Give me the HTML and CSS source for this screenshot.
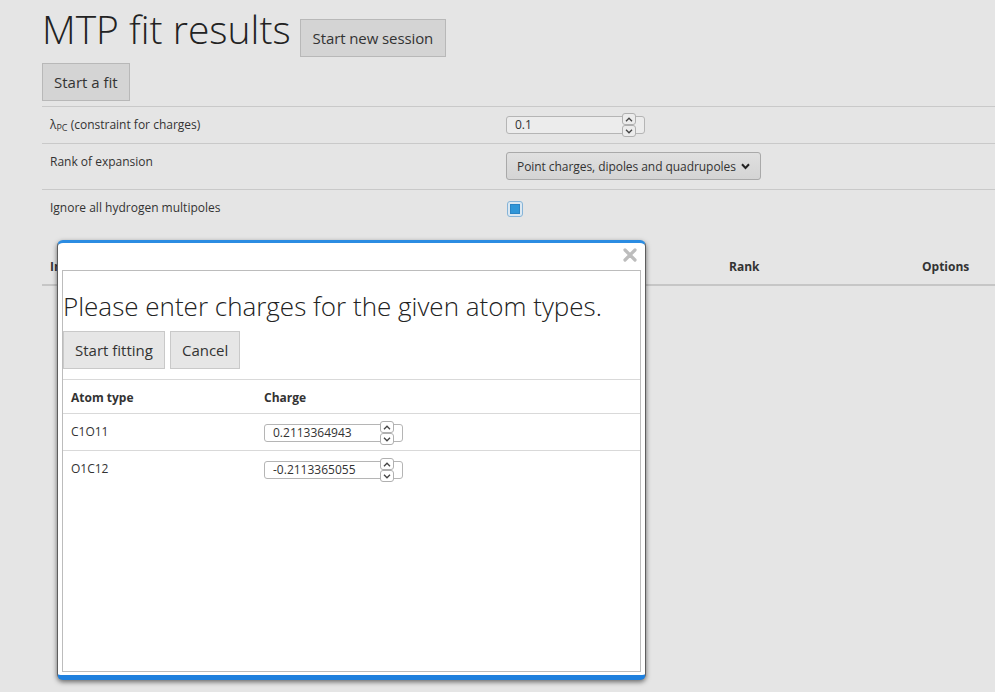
FILE: index.html
```html
<!DOCTYPE html>
<html>
<head>
<meta charset="utf-8">
<link rel="stylesheet" href="styles.css">
</head>
<body>
<div class="page">
  <div class="title-row">
    <h1 class="title">MTP fit results</h1>
    <button class="btn btn-session">Start new session</button>
  </div>
  <button class="btn btn-fit">Start a fit</button>

  <div class="settings">
    <div class="srow srow-1">
      <div class="slabel">λ<sub>PC</sub> (constraint for charges)</div>
      <div class="sval">
        <div class="num num-page">
          <span class="num-text">0.1</span>
          <span class="spin">
            <span class="spin-btn"><svg width="8" height="5" viewBox="0 0 8 5"><path d="M1 4.2 L4 1.2 L7 4.2" fill="none" stroke="#444" stroke-width="1.3"/></svg></span>
            <span class="spin-btn"><svg width="8" height="5" viewBox="0 0 8 5"><path d="M1 0.8 L4 3.8 L7 0.8" fill="none" stroke="#444" stroke-width="1.3"/></svg></span>
          </span>
        </div>
      </div>
    </div>
    <div class="srow srow-2">
      <div class="slabel">Rank of expansion</div>
      <div class="sval">
        <div class="select">
          <span class="select-text">Point charges, dipoles and quadrupoles</span>
          <svg class="caret" width="9" height="7" viewBox="0 0 9 7"><path d="M1 1.3 L4.5 5 L8 1.3" fill="none" stroke="#222" stroke-width="2"/></svg>
        </div>
      </div>
    </div>
    <div class="srow srow-3">
      <div class="slabel">Ignore all hydrogen multipoles</div>
      <div class="sval">
        <div class="check"><div class="check-in"></div></div>
      </div>
    </div>
  </div>

  <div class="results-head">
    <div class="hcell">Index</div>
    <div class="hcell">Rank</div>
    <div class="hcell">Options</div>
  </div>
</div>

<div class="modal">
  <svg class="close" width="14" height="14" viewBox="0 0 14 14"><path d="M2 2 L12 12 M12 2 L2 12" stroke="#bdbdbd" stroke-width="3.2" stroke-linecap="round"/></svg>
  <div class="frame">
    <h2 class="prompt">Please enter charges for the given atom types.</h2>
    <div class="modal-actions">
      <button class="btn btn-light">Start fitting</button>
      <button class="btn btn-light">Cancel</button>
    </div>
    <div class="ctable">
      <div class="crow chead">
        <div class="ccell">Atom type</div>
        <div class="ccell">Charge</div>
      </div>
      <div class="crow">
        <div class="ccell">C1O11</div>
        <div class="ccell">
          <div class="num num-modal">
            <span class="num-text">0.2113364943</span>
            <span class="spin">
              <span class="spin-btn"><svg width="8" height="5" viewBox="0 0 8 5"><path d="M1 4.2 L4 1.2 L7 4.2" fill="none" stroke="#444" stroke-width="1.3"/></svg></span>
              <span class="spin-btn"><svg width="8" height="5" viewBox="0 0 8 5"><path d="M1 0.8 L4 3.8 L7 0.8" fill="none" stroke="#444" stroke-width="1.3"/></svg></span>
            </span>
          </div>
        </div>
      </div>
      <div class="crow">
        <div class="ccell">O1C12</div>
        <div class="ccell">
          <div class="num num-modal">
            <span class="num-text">-0.2113365055</span>
            <span class="spin">
              <span class="spin-btn"><svg width="8" height="5" viewBox="0 0 8 5"><path d="M1 4.2 L4 1.2 L7 4.2" fill="none" stroke="#444" stroke-width="1.3"/></svg></span>
              <span class="spin-btn"><svg width="8" height="5" viewBox="0 0 8 5"><path d="M1 0.8 L4 3.8 L7 0.8" fill="none" stroke="#444" stroke-width="1.3"/></svg></span>
            </span>
          </div>
        </div>
      </div>
    </div>
  </div>
</div>
</body>
</html>
```
FILE: styles.css
```css
* { box-sizing: border-box; }
html, body {
  margin: 0;
  padding: 0;
  background: #e5e5e5;
  font-family: "Open Sans", "DejaVu Sans", sans-serif;
  color: #333;
  font-size: 12px;
  overflow: hidden;
}
.page {
  padding-left: 42px;
  height: 692px;
}
.title-row {
  display: flex;
  align-items: flex-start;
}
.title {
  margin: 5px 0 0 0;
  font-size: 39px;
  line-height: 48px;
  font-weight: 300;
  color: #222;
}
.btn {
  font-family: "Open Sans", "DejaVu Sans", sans-serif;
  font-size: 15px;
  color: #333;
  height: 38px;
  padding: 0 12px;
  background: #d4d4d4;
  border: 1px solid #b8b8b8;
  border-radius: 0;
  white-space: nowrap;
  cursor: pointer;
}
.btn-session {
  margin: 19px 0 0 9px;
  letter-spacing: -0.1px;
}
.btn-fit {
  margin-top: 6px;
  display: block;
  padding: 0 11px;
}
.settings {
  margin-top: 5px;
  border-top: 1px solid #c9c9c9;
}
.srow {
  display: grid;
  grid-template-columns: 456px 1fr;
  border-bottom: 1px solid #c9c9c9;
}
.srow-3 { border-bottom: none; }
.slabel {
  padding: 9px 8px 8px 8px;
  line-height: 18px;
}
.slabel sub {
  font-size: 9px;
  vertical-align: -2px;
  line-height: 0;
}
.sval {
  padding: 8px 8px 9px 8px;
}
.num {
  display: flex;
  align-items: center;
  width: 139px;
  height: 18px;
  border: 1px solid #b5b5b5;
  border-radius: 3px;
  padding-left: 8px;
}
.num-page { background: #ececec; margin-top: 1px; }
.num-modal { background: #fff; margin-top: 1px; }
.num-text {
  line-height: 16px;
  color: #333;
  white-space: nowrap;
}
.spin {
  margin-left: auto;
  margin-right: 8px;
  display: flex;
  flex-direction: column;
}
.spin-btn {
  width: 14px;
  height: 12px;
  border: 1px solid #b0b0b0;
  border-radius: 3px;
  display: flex;
  align-items: center;
  justify-content: center;
}
.num-page .spin-btn { background: #ececec; }
.num-modal .spin-btn { background: #fff; }
.select {
  width: 255px;
  height: 28px;
  display: flex;
  align-items: center;
  padding: 0 10px 0 10px;
  background: linear-gradient(#e0e0e0, #d4d4d4);
  border: 1px solid #a9a9a9;
  border-radius: 3px;
  color: #333;
  white-space: nowrap;
}
.select-text { letter-spacing: -0.06px; }
.select .caret { margin-left: auto; flex: none; }
.check {
  width: 16px;
  height: 16px;
  margin: 3px 0 0 1px;
  border: 1px solid #86b4d8;
  border-radius: 3px;
  background: #dbe8f2;
  padding: 2px;
}
.check-in {
  width: 10px;
  height: 10px;
  background: #2f96d8;
  border: 1px solid #2a84c4;
}
.results-head {
  margin-top: 23px;
  display: grid;
  grid-template-columns: 679px 193px 1fr;
  border-bottom: 2px solid #c6c6c6;
  font-weight: 700;
  color: #333;
}
.hcell {
  padding: 9px 8px 8px 8px;
  line-height: 18px;
}
.modal {
  position: absolute;
  left: 57px;
  top: 240px;
  width: 589px;
  height: 440px;
  background: #fff;
  border-left: 1px solid #5e5e5e;
  border-right: 1px solid #5e5e5e;
  border-top: 3px solid #2b8ce2;
  border-bottom: 5px solid #1f80de;
  border-radius: 6px;
  padding: 27px 4px 3px 4px;
  box-shadow: 0 2px 5px rgba(0,0,0,0.55);
}
.close {
  position: absolute;
  right: 8px;
  top: 5px;
}
.frame {
  height: 100%;
  border: 1px solid #bcbcbc;
}
.prompt {
  margin: 20px 0 0 0;
  font-size: 26px;
  line-height: 30px;
  font-weight: 300;
  color: #222;
}
.modal-actions {
  margin-top: 10px;
  display: flex;
  gap: 5px;
}
.btn-light {
  background: #e6e6e6;
  border: 1px solid #c9c9c9;
  padding: 0 11px;
}
.ctable {
  margin-top: 10px;
  border-top: 1px solid #d9d9d9;
}
.crow {
  display: grid;
  grid-template-columns: 193px 1fr;
  border-bottom: 1px solid #d9d9d9;
}
.crow:last-child { border-bottom: none; }
.ccell {
  padding: 9px 8px 8px 8px;
  line-height: 18px;
}
.chead .ccell {
  font-weight: 700;
  padding: 9px 8px 6px 8px;
}
```
